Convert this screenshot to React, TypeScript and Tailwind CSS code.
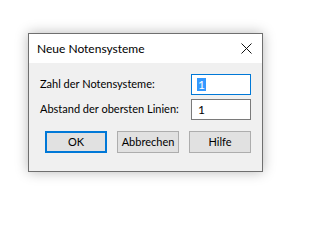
import { FC } from "react";

const font = { fontFamily: 'Lato, "Liberation Sans", sans-serif' };

const App: FC = () => {
  return (
    <div
      className="w-[303px] h-[208px] bg-white pl-[28px] pt-[33px] text-[11px] text-black"
      style={font}
    >
      {/* Dialogfenster */}
      <div className="w-[235px] h-[139px] border border-[#6f6f6f] bg-[#f0f0f0] shadow-[0_0_12px_rgba(0,0,0,0.28)] flex flex-col">
        {/* Titelleiste */}
        <div className="h-[29px] bg-white flex items-center justify-between pl-[8px] pr-[8px] shrink-0">
          <span className="leading-none whitespace-nowrap text-[12px]">Neue Notensysteme</span>
          <svg width="11" height="11" viewBox="0 0 11 11" className="mr-[2px]">
            <path d="M0.5 0.5 L10.5 10.5 M10.5 0.5 L0.5 10.5" stroke="#111" strokeWidth="1" />
          </svg>
        </div>

        {/* Inhalt */}
        <div className="flex-1 pt-[11px] px-[11px]">
          <div className="flex items-center justify-between h-[21px]">
            <span className="whitespace-nowrap">Zahl der Notensysteme:</span>
            <div className="w-[60px] h-[21px] shrink-0 border border-[#0078d7] bg-white flex items-center pl-[5px]">
              <span className="bg-[#3399ff] text-white h-[13px] leading-[13px] px-[1px] text-[12px]">1</span>
            </div>
          </div>
          <div className="flex items-center justify-between h-[21px] mt-[4px]">
            <span className="whitespace-nowrap">Abstand der obersten Linien:</span>
            <div className="w-[60px] h-[21px] shrink-0 border border-[#7a7a7a] bg-white flex items-center pl-[6px]">
              <span className="text-[12px]">1</span>
            </div>
          </div>

          {/* Schaltflächen */}
          <div className="flex gap-[10px] mt-[11px] pl-[5px]">
            <button className="w-[62px] h-[22px] bg-[#e1e1e1] border-2 border-[#0078d7] flex items-center justify-center">
              OK
            </button>
            <button className="w-[62px] h-[22px] bg-[#e1e1e1] border border-[#adadad] flex items-center justify-center">
              Abbrechen
            </button>
            <button className="w-[62px] h-[22px] bg-[#e1e1e1] border border-[#adadad] flex items-center justify-center">
              Hilfe
            </button>
          </div>
        </div>
      </div>
    </div>
  );
};

export default App;
